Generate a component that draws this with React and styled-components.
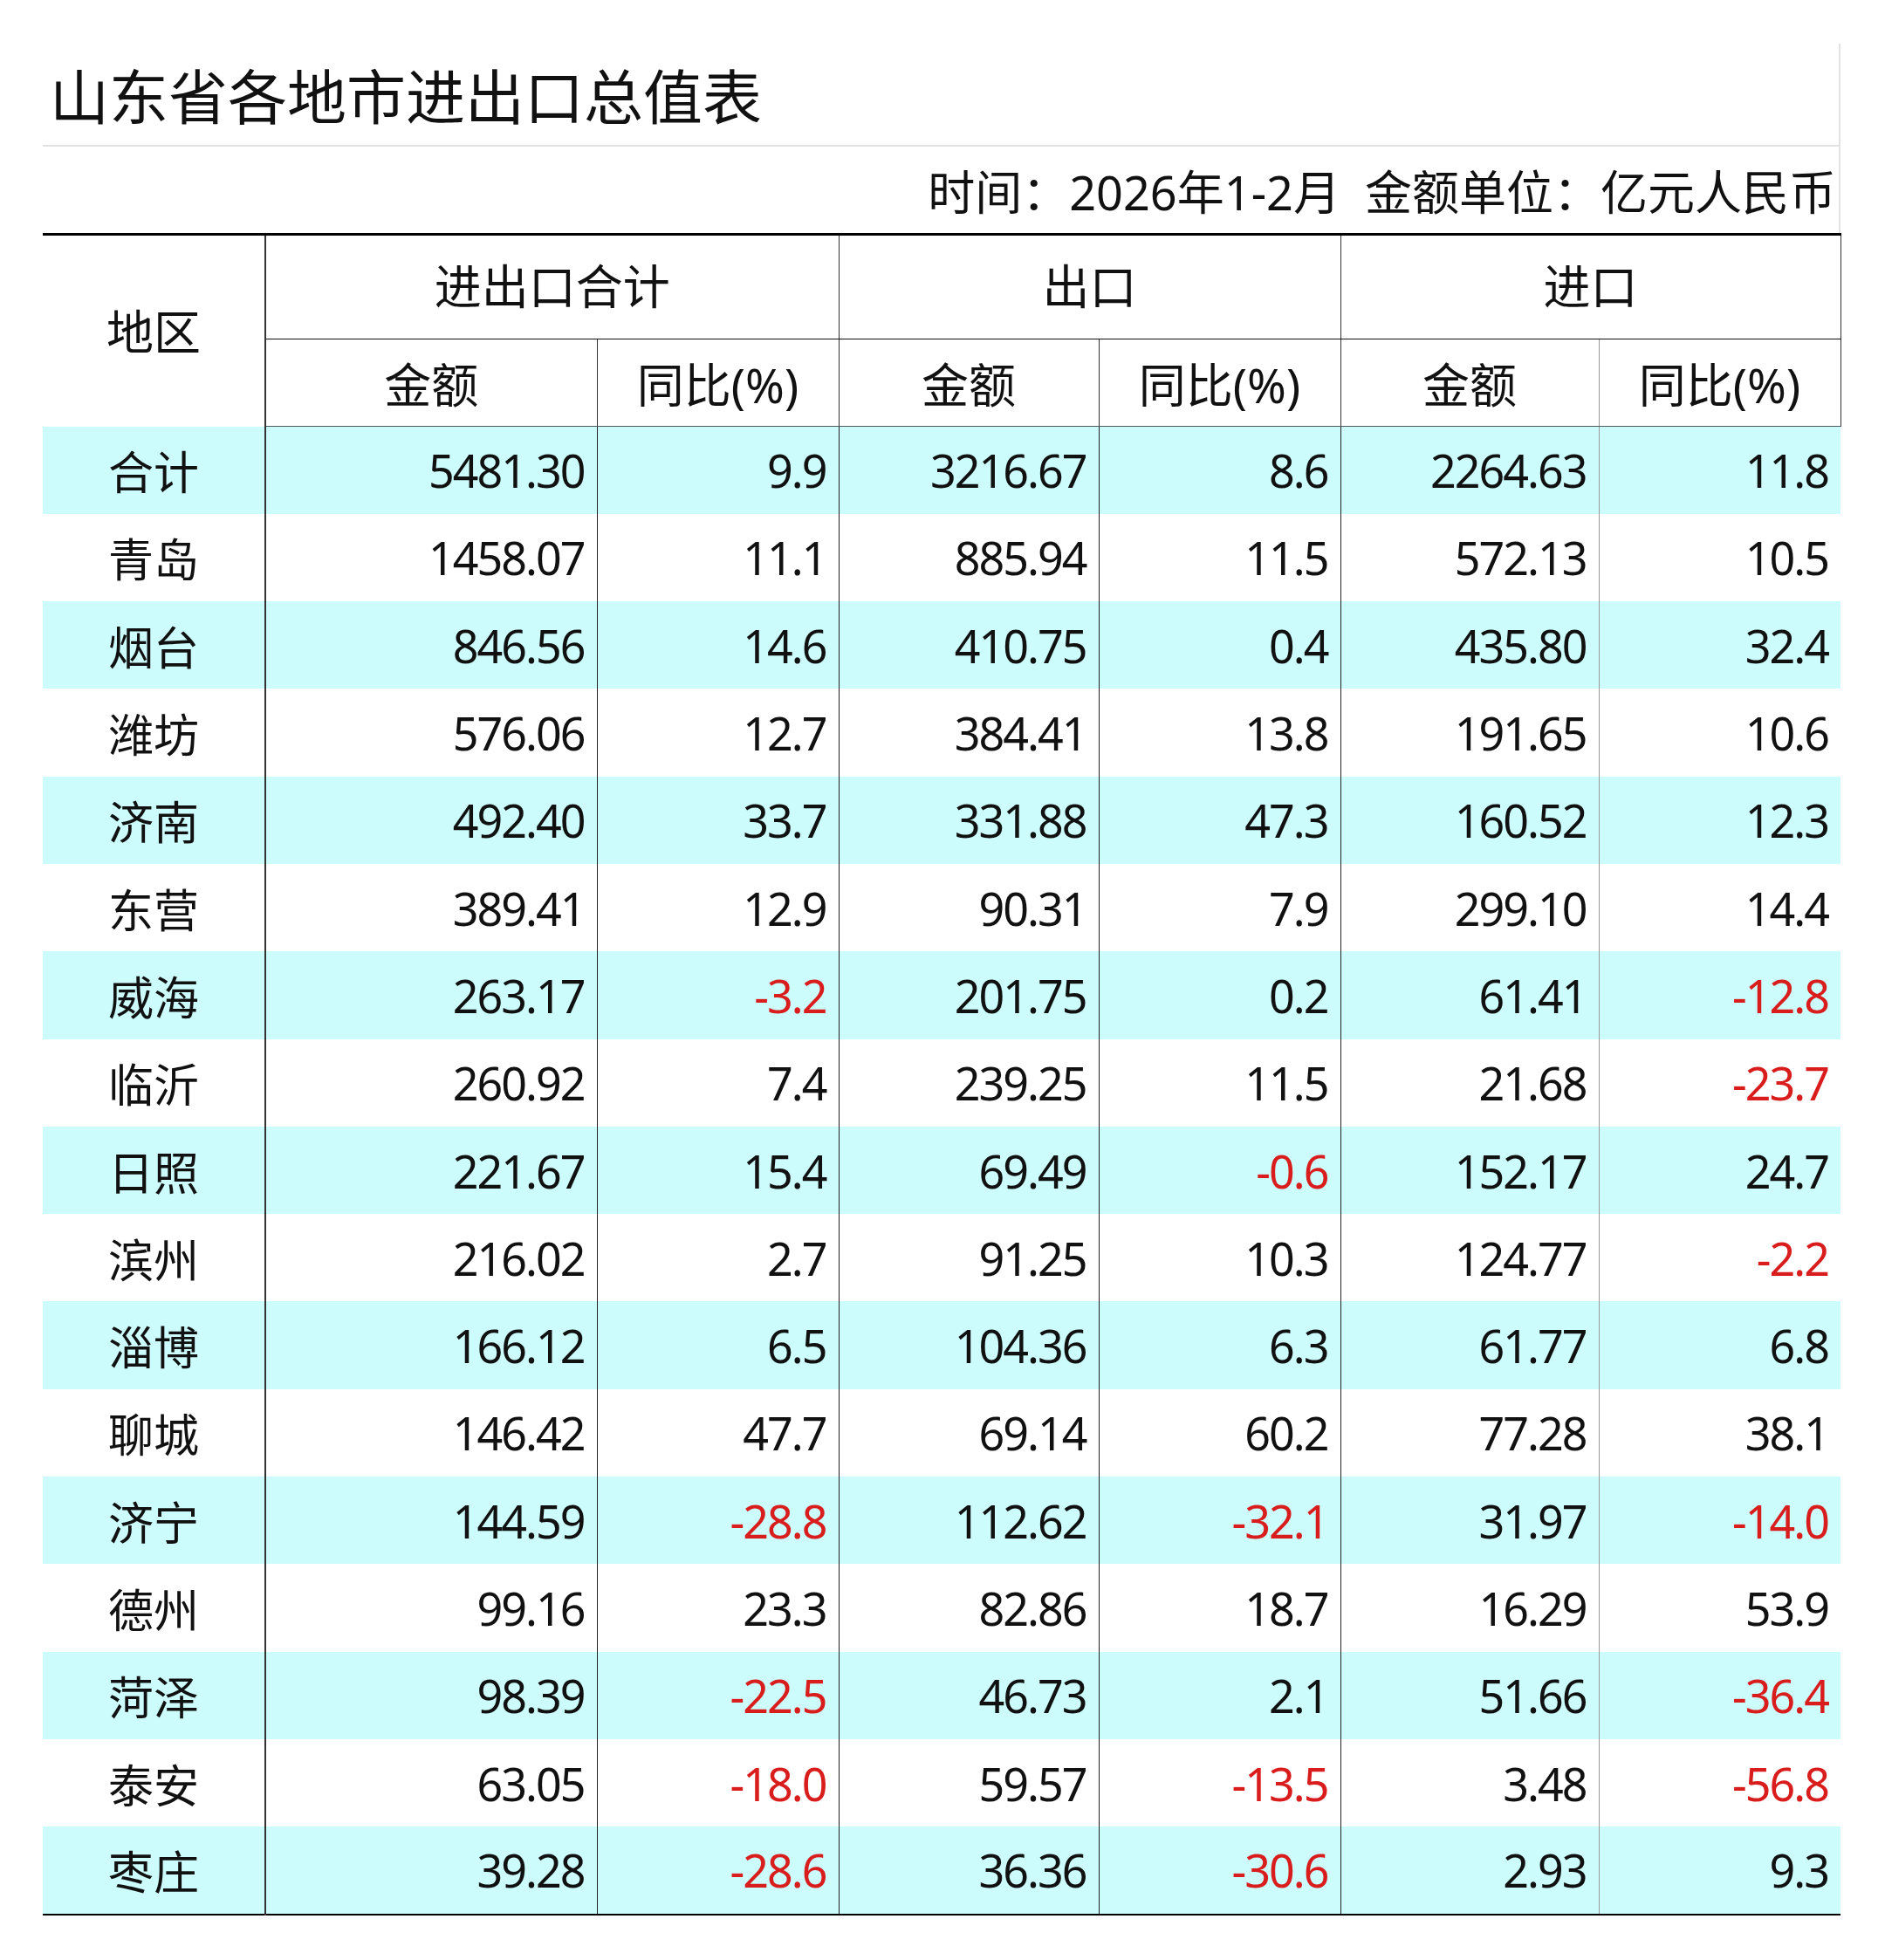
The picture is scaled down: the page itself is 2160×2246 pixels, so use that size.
import React from 'react';
import styled, { createGlobalStyle } from 'styled-components';

const GlobalStyle = createGlobalStyle`
  body {
    margin: 0;
    background: #fff;
    color: #111;
    font-family: "Noto Sans", "Noto Sans CJK SC", sans-serif;
  }
`;

const Page = styled.div`
  width: 2060px;
  padding: 50px 0 50px 49px;
`;

const TitleBar = styled.div`
  height: 116px;
  padding-left: 8px;
  border-right: 2px solid #e2e2e2;
  border-bottom: 2px solid #e2e2e2;
  font-family: "Noto Sans CJK SC", sans-serif;
  font-size: 68px;
  line-height: 116px;
  color: #111;
`;

const InfoBar = styled.div`
  height: 99px;
  padding-right: 3px;
  border-right: 2px solid #e2e2e2;
  text-align: right;
  white-space: pre;
  font-size: 54px;
  line-height: 104px;
`;

const Table = styled.table`
  width: 2060px;
  table-layout: fixed;
  border-collapse: collapse;
  border-top: 3px solid #000;
  border-bottom: 2px solid #000;
`;

const HeadRow = styled.tr`
  height: ${p => p.$h}px;
`;

const HeadCell = styled.th`
  padding: 0 0 ${p => (p.$lift ? 8 : 0)}px;
  font-weight: 400;
  font-size: 54px;
  text-align: center;
  vertical-align: middle;
  border-right: 1px solid ${p => (p.$light ? '#9a9a9a' : '#333')};
  border-bottom: 1px solid ${p => (p.$bottom ? '#4d5b60' : '#111')};
`;

const AreaHead = styled.th`
  padding: 0 0 4px;
  font-weight: 400;
  font-size: 54px;
  text-align: center;
  vertical-align: middle;
  border-right: 2px solid #333;
`;

const Row = styled.tr`
  height: 100.3px;
  background: ${p => (p.$shade ? '#ccfcfc' : '#fff')};
`;

const AreaCell = styled.td`
  padding: 0;
  font-size: 52px;
  text-align: center;
  vertical-align: middle;
  border-right: 2px solid #333;
`;

const NumCell = styled.td`
  padding: 0 14px 0 0;
  font-size: 52px;
  letter-spacing: -2px;
  text-align: right;
  vertical-align: middle;
  color: ${p => (p.$neg ? '#d91c1c' : '#111')};
  border-right: ${p => (p.$last ? 'none' : `1px solid ${p.$light ? '#9a9a9a' : '#222'}`)};
`;

const rows = [
  ['合计', '5481.30', '9.9', '3216.67', '8.6', '2264.63', '11.8'],
  ['青岛', '1458.07', '11.1', '885.94', '11.5', '572.13', '10.5'],
  ['烟台', '846.56', '14.6', '410.75', '0.4', '435.80', '32.4'],
  ['潍坊', '576.06', '12.7', '384.41', '13.8', '191.65', '10.6'],
  ['济南', '492.40', '33.7', '331.88', '47.3', '160.52', '12.3'],
  ['东营', '389.41', '12.9', '90.31', '7.9', '299.10', '14.4'],
  ['威海', '263.17', '-3.2', '201.75', '0.2', '61.41', '-12.8'],
  ['临沂', '260.92', '7.4', '239.25', '11.5', '21.68', '-23.7'],
  ['日照', '221.67', '15.4', '69.49', '-0.6', '152.17', '24.7'],
  ['滨州', '216.02', '2.7', '91.25', '10.3', '124.77', '-2.2'],
  ['淄博', '166.12', '6.5', '104.36', '6.3', '61.77', '6.8'],
  ['聊城', '146.42', '47.7', '69.14', '60.2', '77.28', '38.1'],
  ['济宁', '144.59', '-28.8', '112.62', '-32.1', '31.97', '-14.0'],
  ['德州', '99.16', '23.3', '82.86', '18.7', '16.29', '53.9'],
  ['菏泽', '98.39', '-22.5', '46.73', '2.1', '51.66', '-36.4'],
  ['泰安', '63.05', '-18.0', '59.57', '-13.5', '3.48', '-56.8'],
  ['枣庄', '39.28', '-28.6', '36.36', '-30.6', '2.93', '9.3'],
];

const colWidths = [255, 380, 277, 298, 277, 296, 277];

export default function App() {
  return (
    <>
      <GlobalStyle />
      <Page>
        <TitleBar>山东省各地市进出口总值表</TitleBar>
        <InfoBar>{'时间：2026年1-2月  金额单位：亿元人民币'}</InfoBar>
        <Table>
          <colgroup>
            {colWidths.map((w, i) => (
              <col key={i} style={{ width: w }} />
            ))}
          </colgroup>
          <thead>
            <HeadRow $h={120}>
              <AreaHead rowSpan={2}>地区</AreaHead>
              <HeadCell $lift colSpan={2}>进出口合计</HeadCell>
              <HeadCell $lift colSpan={2}>出口</HeadCell>
              <HeadCell $lift colSpan={2}>进口</HeadCell>
            </HeadRow>
            <HeadRow $h={100}>
              <HeadCell $bottom>金额</HeadCell>
              <HeadCell $bottom>同比(%)</HeadCell>
              <HeadCell $bottom>金额</HeadCell>
              <HeadCell $bottom>同比(%)</HeadCell>
              <HeadCell $bottom $light>金额</HeadCell>
              <HeadCell $bottom>同比(%)</HeadCell>
            </HeadRow>
          </thead>
          <tbody>
            {rows.map(([area, ...vals], i) => (
              <Row key={area} $shade={i % 2 === 0}>
                <AreaCell>{area}</AreaCell>
                {vals.map((v, j) => (
                  <NumCell
                    key={j}
                    $neg={v.startsWith('-')}
                    $light={j === 4}
                    $last={j === 5}
                  >
                    {v}
                  </NumCell>
                ))}
              </Row>
            ))}
          </tbody>
        </Table>
      </Page>
    </>
  );
}
